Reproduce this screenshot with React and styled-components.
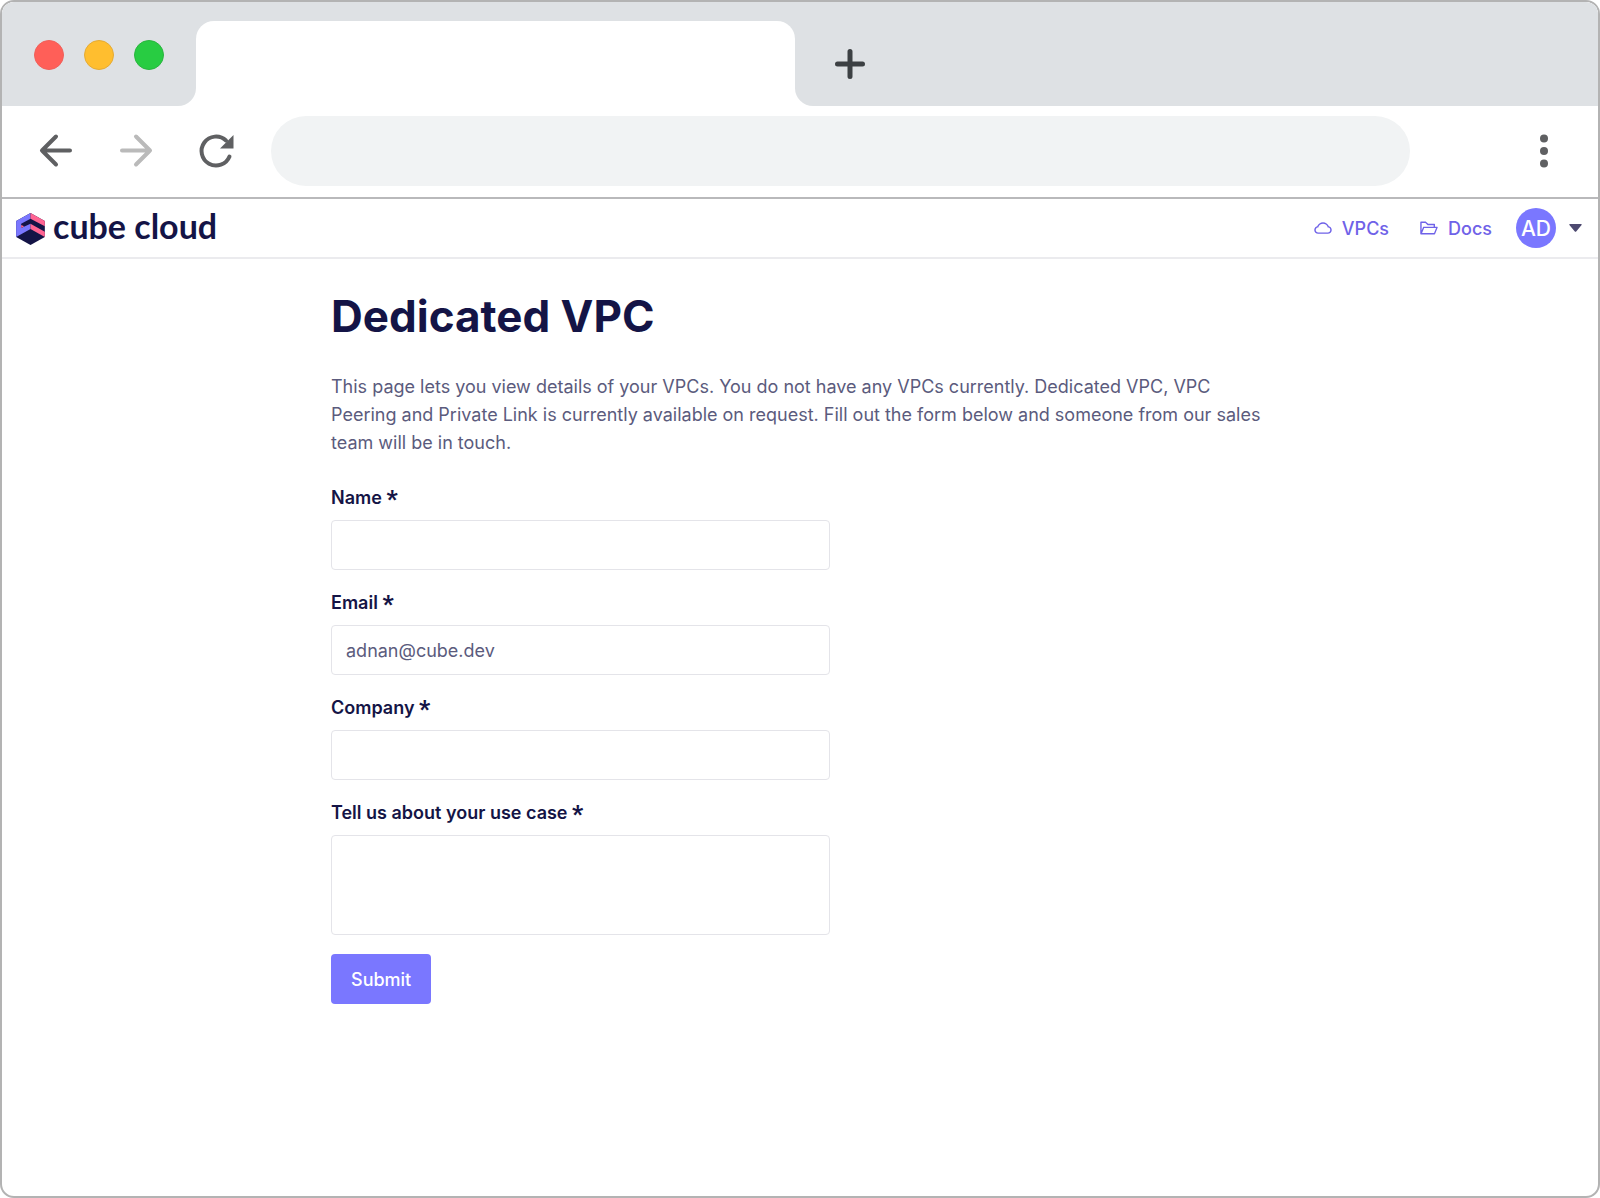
import { useState } from 'react'
import styled, { createGlobalStyle } from 'styled-components'
import { AiOutlineCloud, AiOutlineFolderOpen } from 'react-icons/ai'

const GlobalStyle = createGlobalStyle`
  * {
    box-sizing: border-box;
  }
  body {
    margin: 0;
    background: #fff;
    color: #141446;
    font-family: Inter, "Liberation Sans", sans-serif;
    font-size: 18px;
  }
  button, input, textarea {
    font: inherit;
  }
`

const Window = styled.div`
  min-height: 100vh;
  border: 2px solid #b3b3b3;
  border-radius: 14px;
  overflow: hidden;
  background: #fff;
`

const TabStrip = styled.div`
  display: flex;
  height: 104px;
  background: #fff;
`

const StripEnd = styled.div`
  display: flex;
  align-items: center;
  background: #dee1e4;
  padding: 2px 32px 0;
`

const Lights = styled(StripEnd)`
  width: 194px;
  gap: 20px;
  border-bottom-right-radius: 18px;
`

const StripRest = styled(StripEnd)`
  flex: 1;
  padding: 20px 39px 0;
  border-bottom-left-radius: 18px;
`

const Light = styled.span`
  width: 30px;
  height: 30px;
  border-radius: 50%;
  background: ${props => props.$fill};
  border: 1px solid ${props => props.$edge};
`

const TabSlot = styled.div`
  width: 599px;
  padding-top: 19px;
  background: #dee1e4;
`

const Tab = styled.div`
  height: 100%;
  background: #fff;
  border-radius: 18px 18px 0 0;
`

const IconButton = styled.button`
  display: flex;
  padding: 0;
  border: 0;
  background: none;
  color: ${props => props.$color || '#5f6062'};
  cursor: pointer;
`

const Toolbar = styled.div`
  display: flex;
  align-items: center;
  height: 93px;
  padding: 0 50px 2px 34px;
  border-bottom: 2px solid #b9b9bb;
`

const NavButtons = styled.div`
  display: flex;
  gap: 40px;
`

const Address = styled.input`
  flex: 1;
  height: 70px;
  margin: 0 130px 0 35px;
  padding: 0 35px;
  border: 0;
  border-radius: 35px;
  background: #f1f3f4;
`

const Header = styled.header`
  display: flex;
  align-items: center;
  justify-content: space-between;
  height: 60px;
  padding: 0 16px 0 14px;
  border-bottom: 2px solid #ebebee;
`

const Brand = styled.a`
  display: flex;
  align-items: center;
  gap: 8px;
  padding-top: 2px;
  color: #141446;
  font: 700 34px/40px Lato, sans-serif;
  text-decoration: none;
`

const Wordmark = styled.span`
  padding-bottom: 6px;
`

const Menu = styled.nav`
  display: flex;
  align-items: center;
`

const MenuLink = styled.a`
  display: flex;
  align-items: center;
  gap: 9px;
  margin-right: 30px;
  color: #6f62e8;
  font-weight: 500;
  text-decoration: none;

  &:last-of-type {
    margin-right: 24px;
  }
`

const Account = styled.button`
  display: flex;
  align-items: center;
  gap: 13px;
  padding: 0;
  border: 0;
  background: none;
  cursor: pointer;
`

const Avatar = styled.span`
  width: 40px;
  height: 40px;
  border-radius: 50%;
  background: #7a77ff;
  color: #fff;
  font-size: 21px;
  font-weight: 500;
  line-height: 42px;
  text-align: center;
`

const Main = styled.main`
  max-width: 938px;
  margin: 0 auto;
  padding: 29px 0 40px;
`

const Title = styled.h1`
  margin: 0 0 29px;
  font-size: 44px;
  font-weight: 700;
  line-height: 56px;
`

const Intro = styled.p`
  margin: 0 0 27px;
  color: #5b5b7d;
  line-height: 28px;
`

const Form = styled.form`
  display: flex;
  flex-direction: column;
  align-items: flex-start;
  gap: 19px;
`

const Field = styled.div`
  display: flex;
  flex-direction: column;
  gap: 9px;
  width: 100%;
  max-width: 499px;
`

const Label = styled.label`
  font-weight: 600;
  line-height: 27px;
`

const Required = styled.span`
  font-family: Roboto, sans-serif;
  font-size: 24px;
  font-weight: 900;
  line-height: 0;
  vertical-align: -3px;
`

const Input = styled.input`
  height: 50px;
  padding: 0 14px;
  border: 1px solid #e4e4e9;
  border-radius: 4px;
  background: #fff;
  color: #5b5b7d;
`

const TextArea = styled(Input)`
  height: 100px;
  padding: 10px 14px;
  resize: none;
`

const Submit = styled.button`
  height: 50px;
  padding: 0 20px;
  border: 0;
  border-radius: 4px;
  background: #7a77ff;
  color: #fff;
  font-weight: 500;
  cursor: pointer;
`

const ArrowIcon = ({ flip }) => (
  <svg width="40" height="40" viewBox="0 0 40 40" fill="none" stroke="currentColor" strokeWidth="4" strokeLinecap="round" strokeLinejoin="round">
    {flip
      ? <path d="M6 19.500H34M20 5.500L34 19.500L20 33.500" />
      : <path d="M34 19.500H6M20 5.500L6 19.500L20 33.500" />}
  </svg>
)

const ReloadIcon = () => (
  <svg width="40" height="40" viewBox="0 0 40 40">
    <path d="M33.500 25.500A14.500 14.500 0 1 1 30 9.500" fill="none" stroke="currentColor" strokeWidth="4" strokeLinecap="round" />
    <path d="M37.500 4V17.500H24Z" fill="currentColor" />
  </svg>
)

const PlusIcon = () => (
  <svg width="32" height="32" viewBox="0 0 32 32" stroke="currentColor" strokeWidth="5" strokeLinecap="round">
    <path d="M16 3.500V28.500M3.500 16H28.500" />
  </svg>
)

const DotsIcon = () => (
  <svg width="8" height="34" viewBox="0 0 8 34" fill="currentColor">
    <circle cx="4" cy="4.500" r="4" />
    <circle cx="4" cy="17" r="4" />
    <circle cx="4" cy="29.500" r="4" />
  </svg>
)

const CubeLogo = () => (
  <svg width="29" height="32" viewBox="0 0 86 96" aria-hidden="true">
    <path d="M43 0L86 24V72L43 96L0 72V24Z" fill="#141446" />
    <path d="M0 24L43 0V17L15 32V45L43 32V48L0 72Z" fill="#7a77ff" />
    <path d="M43 0L86 24V40L43 17Z" fill="#ff6492" />
    <path d="M43 32L86 56V72L43 48Z" fill="#ff6492" />
    <path d="M15 36L24 40L15 45Z" fill="#ff6492" />
  </svg>
)

const CaretIcon = () => (
  <svg width="13" height="8" viewBox="0 0 13 8" fill="#4d4970" aria-hidden="true">
    <path d="M1 0H12Q13.500 0 12.400 1.200L7.400 7.200Q6.500 8.200 5.600 7.200L0.600 1.200Q-0.500 0 1 0Z" />
  </svg>
)

const fields = [
  { id: 'name', label: 'Name' },
  { id: 'email', label: 'Email' },
  { id: 'company', label: 'Company' },
  { id: 'useCase', label: 'Tell us about your use case', multiline: true },
]

function App() {
  const [values, setValues] = useState({ name: '', email: 'adnan@cube.dev', company: '', useCase: '' })

  const update = (e) => {
    setValues({ ...values, [e.target.id]: e.target.value })
  }

  return (
    <>
      <GlobalStyle />
      <Window>
        <TabStrip>
          <Lights>
            <Light $fill="#ff5f58" $edge="#f0605a" />
            <Light $fill="#ffbe2f" $edge="#e5ab35" />
            <Light $fill="#28cc42" $edge="#2ab53f" />
          </Lights>
          <TabSlot><Tab /></TabSlot>
          <StripRest>
            <IconButton $color="#3c4043" aria-label="New tab"><PlusIcon /></IconButton>
          </StripRest>
        </TabStrip>
        <Toolbar>
          <NavButtons>
            <IconButton aria-label="Back"><ArrowIcon /></IconButton>
            <IconButton $color="#bababa" aria-label="Forward"><ArrowIcon flip /></IconButton>
            <IconButton aria-label="Reload"><ReloadIcon /></IconButton>
          </NavButtons>
          <Address aria-label="Address" />
          <IconButton aria-label="More"><DotsIcon /></IconButton>
        </Toolbar>
        <Header>
          <Brand href="#">
            <CubeLogo />
            <Wordmark>cube cloud</Wordmark>
          </Brand>
          <Menu>
            <MenuLink href="#vpcs"><AiOutlineCloud size={20} />VPCs</MenuLink>
            <MenuLink href="#docs"><AiOutlineFolderOpen size={20} />Docs</MenuLink>
            <Account>
              <Avatar>AD</Avatar>
              <CaretIcon />
            </Account>
          </Menu>
        </Header>
        <Main>
          <Title>Dedicated VPC</Title>
          <Intro>
            This page lets you view details of your VPCs. You do not have any VPCs currently. Dedicated VPC, VPC
            Peering and Private Link is currently available on request. Fill out the form below and someone from our sales
            team will be in touch.
          </Intro>
          <Form onSubmit={e => e.preventDefault()}>
            {fields.map(({ id, label, multiline }) => (
              <Field key={id}>
                <Label htmlFor={id}>{label} <Required>*</Required></Label>
                {multiline
                  ? <TextArea as="textarea" id={id} value={values[id]} onChange={update} />
                  : <Input id={id} value={values[id]} onChange={update} />}
              </Field>
            ))}
            <Submit type="submit">Submit</Submit>
          </Form>
        </Main>
      </Window>
    </>
  )
}

export default App
